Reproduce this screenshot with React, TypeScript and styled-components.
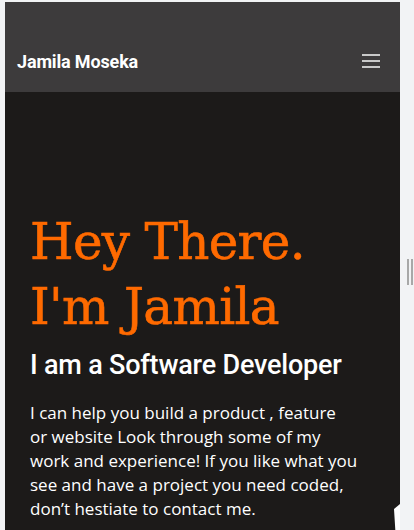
import styled, { createGlobalStyle } from 'styled-components';

const GlobalStyle = createGlobalStyle`
  html, body {
    margin: 0;
    padding: 0;
    background: #f2f3f5;
  }
  * {
    box-sizing: border-box;
  }
`;

const Page = styled.div`
  display: flex;
  align-items: flex-start;
  height: 530px;
  overflow: hidden;
  padding: 2px 0 0 5px;
`;

const Panel = styled.div`
  position: relative;
  width: 395px;
  height: 528px;
  overflow: hidden;
  background: #1c1a19;
`;

const Header = styled.header`
  display: flex;
  align-items: center;
  justify-content: space-between;
  height: 90px;
  padding: 28px 20px 0 12px;
  background: #3d3b3c;
`;

const Brand = styled.span`
  font-family: Roboto, 'Liberation Sans', sans-serif;
  font-weight: 700;
  font-size: 18px;
  letter-spacing: -0.15px;
  color: #ffffff;
`;

const Burger = styled.button`
  display: flex;
  flex-direction: column;
  gap: 4px;
  padding: 0;
  border: none;
  background: none;
  cursor: pointer;

  span {
    display: block;
    width: 18px;
    height: 2px;
    background: #c9c9c9;
  }
`;

const Hero = styled.section`
  padding: 118px 20px 0 25px;
`;

const Title = styled.h1`
  margin: 0;
  font-family: 'DejaVu Serif', serif;
  font-weight: 400;
  font-size: 50px;
  line-height: 65px;
  letter-spacing: -0.7px;
  color: #ff6a00;
  -webkit-text-stroke: 0.6px #ff6a00;
`;

const Subtitle = styled.h2`
  margin: 8px 0 0;
  font-family: Roboto, 'Liberation Sans', sans-serif;
  font-weight: 500;
  font-size: 27px;
  line-height: 34px;
  letter-spacing: -0.2px;
  color: #ffffff;
`;

const Intro = styled.p`
  margin: 19px 0 0;
  font-family: 'Open Sans', 'Noto Sans', sans-serif;
  font-size: 17px;
  line-height: 24px;
  letter-spacing: 0;
  white-space: nowrap;
  color: #ffffff;
`;

const Corner = styled.div`
  position: absolute;
  left: 383px;
  top: 498px;
  width: 20px;
  height: 40px;
  background: #ffffff;
  clip-path: polygon(6px 9px, 17px 0, 20px 40px, 8px 40px);
`;

const Handle = styled.div`
  display: flex;
  gap: 2px;
  margin: 257px 0 0 7px;

  span {
    display: block;
    width: 2px;
    height: 26px;
    background: #a8a8a8;
  }
`;

const introLines = [
  'I can help you build a product , feature',
  'or website Look through some of my',
  'work and experience! If you like what you',
  'see and have a project you need coded,',
  'don’t hestiate to contact me.',
];

export default function App() {
  return (
    <>
      <GlobalStyle />
      <Page>
        <Panel>
          <Header>
            <Brand>Jamila Moseka</Brand>
            <Burger aria-label="menu">
              <span />
              <span />
              <span />
            </Burger>
          </Header>
          <Hero>
            <Title>
              Hey There.
              <br />
              I'm Jamila
            </Title>
            <Subtitle>I am a Software Developer</Subtitle>
            <Intro>
              {introLines.map((line, i) => (
                <span key={i}>
                  {line}
                  {i < introLines.length - 1 && <br />}
                </span>
              ))}
            </Intro>
          </Hero>
          <Corner />
        </Panel>
        <Handle>
          <span />
          <span />
        </Handle>
      </Page>
    </>
  );
}
